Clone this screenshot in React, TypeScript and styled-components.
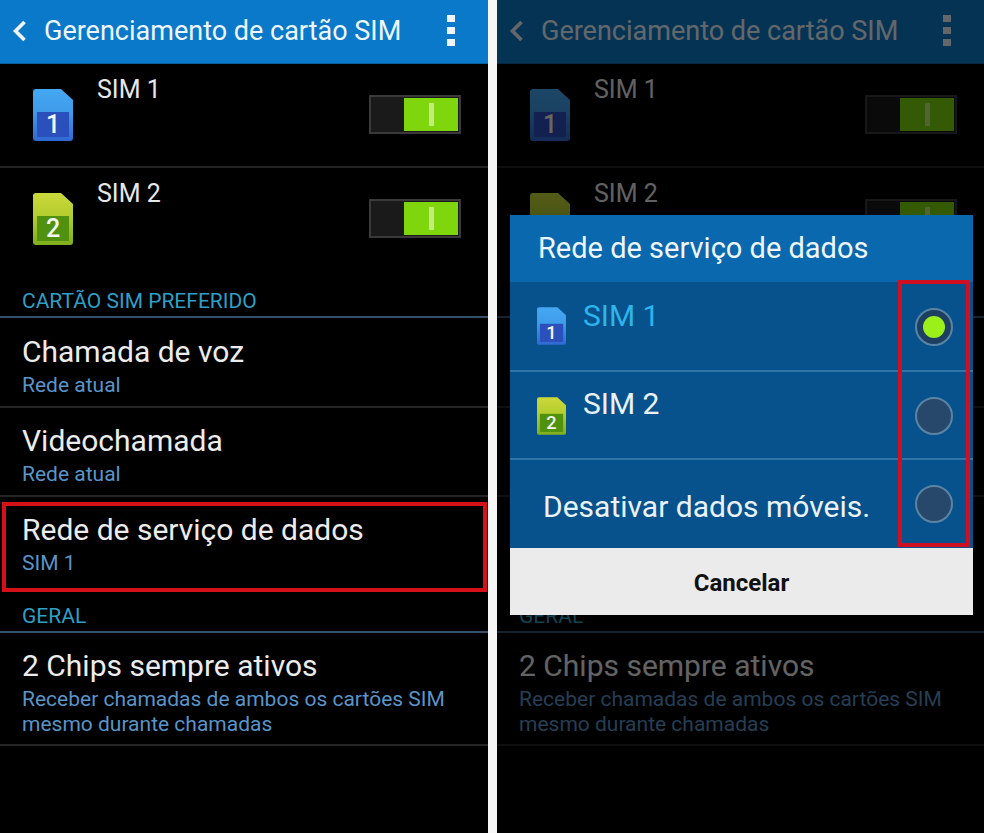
import React from "react";
import styled, { createGlobalStyle } from "styled-components";

const Global = createGlobalStyle`
  html, body { margin: 0; padding: 0; background: #fff; }
  body { font-family: Roboto, "Noto Sans", "Liberation Sans", sans-serif; }
  * { box-sizing: border-box; }
`;

const Page = styled.div`
  width: 984px;
  height: 833px;
  display: grid;
  grid-template-columns: 488px 487px;
  justify-content: space-between;
  overflow: hidden;
  background: #f6f6f6;
`;
const Phone = styled.div`
  position: relative;
  height: 833px;
  background: #000;
  overflow: hidden;
`;
const Bar = styled.header`
  height: 64px;
  background: #0a79c9;
  border-bottom: 1px solid #0a5f9e;
  display: flex;
  align-items: center;
  padding: 0 33px 2px 11px;
  color: #eef6fb;
`;
const Title = styled.h1`
  margin: 0 0 0 15px;
  flex: 1;
  font-size: 27px;
  line-height: 32px;
  font-weight: 400;
  white-space: nowrap;
`;
const SimRow = styled.div<{ $h: number; $line?: boolean }>`
  height: ${(p) => p.$h}px;
  display: flex;
  align-items: flex-start;
  padding: 25px 27px 0 33px;
  border-bottom: ${(p) => (p.$line ? "2px solid #222" : "none")};
`;
const SimName = styled.div`
  flex: 1;
  margin: -14px 0 0 24px;
  font-size: 25px;
  line-height: 30px;
  color: #e8e8e8;
`;
const Track = styled.div`
  width: 92px;
  height: 39px;
  margin-top: 6px;
  background: #1a1a1a;
  border: 2px solid #3a3a3a;
  padding: 1px;
  display: flex;
  justify-content: flex-end;
`;
const Thumb = styled.div`
  width: 54px;
  background: #7fd60c;
  display: flex;
  align-items: center;
  justify-content: center;
  &::after {
    content: "";
    width: 5px;
    height: 23px;
    background: #c4ec7c;
  }
`;
const Section = styled.div<{ $h: number }>`
  height: ${(p) => p.$h}px;
  display: flex;
  align-items: flex-end;
  padding: 0 0 2px 22px;
  font-size: 21px;
  line-height: 26px;
  color: #2f9fc6;
  border-bottom: 2px solid #35526c;
`;
const Row = styled.div<{ $h: number; $top?: number; $plain?: boolean }>`
  height: ${(p) => p.$h}px;
  padding: ${(p) => p.$top ?? 15}px 22px 0;
  border-bottom: ${(p) => (p.$plain ? "none" : "2px solid #252525")};
`;
const RowTitle = styled.div`
  font-size: 30px;
  line-height: 36px;
  color: #ececec;
  white-space: nowrap;
`;
const RowSub = styled.div`
  font-size: 21px;
  line-height: 25px;
  margin-top: 3px;
  color: #5a94c8;
  white-space: nowrap;
`;
const Highlight = styled.div`
  position: absolute;
  left: 2px;
  top: 502px;
  width: 485px;
  height: 90px;
  border: 4px solid #d61018;
`;
const Dim = styled.div`
  position: absolute;
  inset: 0;
  background: rgba(0, 0, 0, 0.58);
`;
const Dialog = styled.div`
  position: absolute;
  left: 13px;
  top: 215px;
  width: 463px;
  height: 400px;
  display: flex;
  flex-direction: column;
`;
const DialogTitle = styled.div`
  height: 67px;
  background: #0a68ae;
  color: #eef6fb;
  font-size: 29px;
  line-height: 66px;
  padding-left: 28px;
`;
const Options = styled.div`
  position: relative;
  background: #07528c;
`;
const Option = styled.div<{ $h: number; $last?: boolean }>`
  height: ${(p) => p.$h}px;
  display: flex;
  align-items: flex-start;
  padding: 25px 20px 0 27px;
  border-bottom: ${(p) => (p.$last ? "none" : "2px solid #2f75a8")};
`;
const OptionLabel = styled.div<{ $on?: boolean; $top: number; $left: number }>`
  flex: 1;
  margin: ${(p) => p.$top}px 0 0 ${(p) => p.$left}px;
  font-size: 30px;
  line-height: 36px;
  color: ${(p) => (p.$on ? "#2eb4ea" : "#eaf2f8")};
  white-space: nowrap;
`;
const Radio = styled.div<{ $on?: boolean; $top: number }>`
  width: 38px;
  height: 38px;
  margin-top: ${(p) => p.$top}px;
  border-radius: 50%;
  border: 2px solid #5a84a4;
  background: ${(p) => (p.$on ? "#1c3f62" : "#27486a")};
  display: flex;
  align-items: center;
  justify-content: center;
  &::after {
    content: "";
    display: ${(p) => (p.$on ? "block" : "none")};
    width: 22px;
    height: 22px;
    border-radius: 50%;
    background: #9cf01a;
  }
`;
const RedFrame = styled.div`
  position: absolute;
  right: 3px;
  top: -2px;
  width: 72px;
  height: 267px;
  border: 4px solid #d01020;
`;
const CancelBtn = styled.div`
  height: 67px;
  background: #ebebeb;
  color: #111;
  font-size: 24px;
  font-weight: 700;
  text-align: center;
  line-height: 70px;
`;

const Chevron = () => (
  <svg width="18" height="24" viewBox="0 0 18 24">
    <path d="M13.5 3 L4.5 12 L13.5 21" fill="none" stroke="currentColor" strokeWidth="3.6" />
  </svg>
);
const Dots = () => (
  <svg width="8" height="31" viewBox="0 0 8 31">
    <rect x="0" y="0" width="8" height="7" fill="currentColor" />
    <rect x="0" y="12" width="8" height="7" fill="currentColor" />
    <rect x="0" y="24" width="8" height="7" fill="currentColor" />
  </svg>
);
const SimIcon = ({ n, w, h, id }: { n: 1 | 2; w: number; h: number; id: string }) => {
  const blue = n === 1;
  const low = blue ? "#2b50bc" : "#50920f";
  const gid = `sim-${n}-${id}`;
  return (
    <svg width={w} height={h} viewBox="0 0 40 52">
      <defs>
        <linearGradient id={gid} x1="0" y1="0" x2="0" y2="1">
          <stop offset="0" stopColor={blue ? "#45a8f2" : "#cbd93a"} />
          <stop offset="0.45" stopColor={blue ? "#3f9bea" : "#b4cc2e"} />
          <stop offset="1" stopColor={blue ? "#3068d2" : "#7fae1e"} />
        </linearGradient>
      </defs>
      <path d="M3 0 H28 L40 11 V49 Q40 52 37 52 H3 Q0 52 0 49 V3 Q0 0 3 0 Z" fill={`url(#${gid})`} />
      <rect x="4" y="23" width="32" height="25" fill={low} />
      <text x="20" y="44" textAnchor="middle" fontFamily="Roboto, sans-serif" fontWeight="500" fontSize="25" fill="#f2f6f2">
        {n}
      </text>
    </svg>
  );
};

const Screen = ({ id }: { id: string }) => (
  <>
    <Bar>
      <Chevron />
      <Title>Gerenciamento de cartão SIM</Title>
      <Dots />
    </Bar>
    <SimRow $h={104} $line>
      <SimIcon n={1} w={40} h={52} id={id} />
      <SimName>SIM 1</SimName>
      <Track>
        <Thumb />
      </Track>
    </SimRow>
    <SimRow $h={102}>
      <SimIcon n={2} w={40} h={52} id={id} />
      <SimName>SIM 2</SimName>
      <Track>
        <Thumb />
      </Track>
    </SimRow>
    <Section $h={48}>CARTÃO SIM PREFERIDO</Section>
    <Row $h={90} $top={16}>
      <RowTitle>Chamada de voz</RowTitle>
      <RowSub>Rede atual</RowSub>
    </Row>
    <Row $h={89}>
      <RowTitle>Videochamada</RowTitle>
      <RowSub>Rede atual</RowSub>
    </Row>
    <Row $h={95} $plain>
      <RowTitle>Rede de serviço de dados</RowTitle>
      <RowSub>SIM 1</RowSub>
    </Row>
    <Section $h={41}>GERAL</Section>
    <Row $h={113} $top={15}>
      <RowTitle>2 Chips sempre ativos</RowTitle>
      <RowSub>
        Receber chamadas de ambos os cartões SIM
        <br />
        mesmo durante chamadas
      </RowSub>
    </Row>
  </>
);

export default function App() {
  return (
    <Page>
      <Global />
      <Phone>
        <Screen id="a" />
        <Highlight />
      </Phone>
      <Phone>
        <Screen id="b" />
        <Dim />
        <Dialog>
          <DialogTitle>Rede de serviço de dados</DialogTitle>
          <Options>
            <Option $h={90}>
              <SimIcon n={1} w={29} h={38} id="c" />
              <OptionLabel $on $top={-9} $left={17}>SIM 1</OptionLabel>
              <Radio $on $top={1} />
            </Option>
            <Option $h={88}>
              <SimIcon n={2} w={29} h={38} id="c" />
              <OptionLabel $top={-11} $left={17}>SIM 2</OptionLabel>
              <Radio $top={0} />
            </Option>
            <Option $h={88} $last>
              <OptionLabel $top={4} $left={6}>Desativar dados móveis.</OptionLabel>
              <Radio $top={0} />
            </Option>
            <RedFrame />
          </Options>
          <CancelBtn>Cancelar</CancelBtn>
        </Dialog>
      </Phone>
    </Page>
  );
}
